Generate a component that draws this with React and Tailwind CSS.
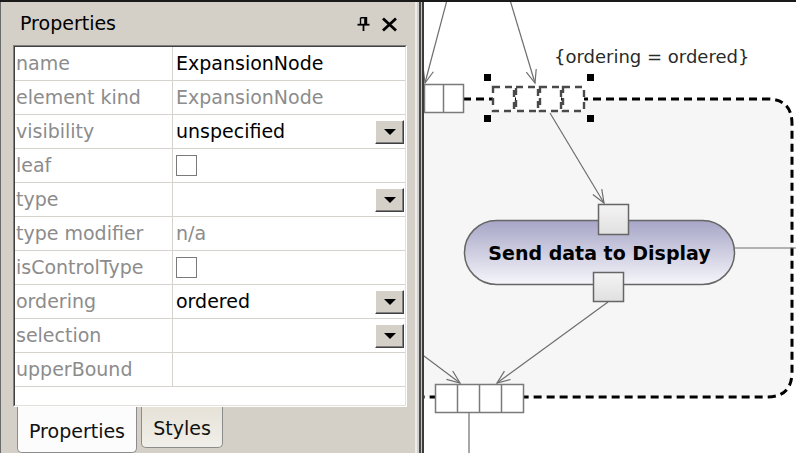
import React from 'react';

const rows = [
  { label: 'name', value: 'ExpansionNode', dark: true },
  { label: 'element kind', value: 'ExpansionNode' },
  { label: 'visibility', value: 'unspecified', dark: true, combo: true },
  { label: 'leaf', check: true },
  { label: 'type', combo: true },
  { label: 'type modifier', value: 'n/a' },
  { label: 'isControlType', check: true },
  { label: 'ordering', value: 'ordered', dark: true, combo: true },
  { label: 'selection', combo: true },
  { label: 'upperBound' },
];

// open arrow head at (x2, y2), pointing along the line
const arrow = (x1, y1, x2, y2, len = 14, ang = 0.38) => {
  const a = Math.atan2(y2 - y1, x2 - x1);
  const ax = x2 - len * Math.cos(a - ang);
  const ay = y2 - len * Math.sin(a - ang);
  const bx = x2 - len * Math.cos(a + ang);
  const by = y2 - len * Math.sin(a + ang);
  return `M${ax} ${ay} L${x2} ${y2} L${bx} ${by}`;
};

const flows = [
  [447, 0, 425, 83],
  [510, 0, 535, 83],
  [550, 113, 604, 203],
  [608, 302, 497, 383],
  [420, 353, 460, 383],
];

const ComboButton = () => (
  <div className="w-[29px] h-[24px] mr-px bg-[#d4d0c8] border border-t-white border-l-white border-r-[#404040] border-b-[#404040] shadow-[inset_-1px_-1px_0_#808080] flex items-center justify-center">
    <div className="w-0 h-0 border-x-[6px] border-x-transparent border-t-[6px] border-t-black" />
  </div>
);

const PropertyRow = ({ row }) => (
  <div className="flex h-[34px] border-b border-[#d6d3ce]">
    <div className="w-[158px] pl-px flex items-center border-r border-[#d6d3ce] text-[#8c8c8c] whitespace-nowrap">
      {row.label}
    </div>
    <div className="flex-1 flex items-center justify-between pl-[3px]">
      {row.check ? (
        <div className="w-[21px] h-[21px] border border-[#7a7a7a] bg-white" />
      ) : (
        <span className={row.dark ? 'text-black' : 'text-[#8c8c8c]'}>{row.value}</span>
      )}
      {row.combo && <ComboButton />}
    </div>
  </div>
);

const PinIcon = () => (
  <svg width="13" height="14" viewBox="0 0 13 14" className="mr-[11px]">
    <path d="M3.5 0.8 H9.5 V7 M3.5 0.8 V7" stroke="black" strokeWidth="1.4" fill="none" />
    <rect x="7.2" y="0.8" width="2.8" height="6.5" fill="black" />
    <rect x="0.5" y="6.8" width="12" height="1.8" fill="black" />
    <rect x="5.6" y="8" width="1.8" height="6" fill="black" />
  </svg>
);

const CloseIcon = () => (
  <svg width="17" height="15" viewBox="0 0 17 15">
    <path d="M2 1.5 L15 13.5 M15 1.5 L2 13.5" stroke="black" strokeWidth="2.8" />
  </svg>
);

export default function App() {
  const cells4 = [435, 457, 479, 501];
  const selCells = [492, 515, 539, 562];

  return (
    <div className="w-[796px] h-[453px] flex border-t-2 border-[#1a1a1a] overflow-hidden font-['DejaVu_Sans',Verdana,sans-serif] text-[19px] leading-none">
      {/* properties panel */}
      <div className="w-[415px] h-full shrink-0 bg-[#d4d0c8] border-l border-[#6b6b6b] flex flex-col">
        <div className="h-[43px] flex items-center justify-between pl-[19px] pr-[17px]">
          <span className="text-black">Properties</span>
          <div className="flex items-center pt-px">
            <PinIcon />
            <CloseIcon />
          </div>
        </div>

        <div className="ml-[12px] w-[394px] h-[362px] border-t border-l border-[#808080] border-b border-r border-b-white border-r-white">
          <div className="h-full border-t border-l border-[#404040] border-b border-r border-b-[#e4e1dc] border-r-[#e4e1dc] bg-white flex flex-col">
            {rows.map((row) => (
              <PropertyRow key={row.label} row={row} />
            ))}
          </div>
        </div>

        <div className="flex items-start pl-[16px]">
          <div className="w-[120px] h-[46px] bg-[#fcfcfc] border-x border-b border-[#8c8c8c] rounded-b-[5px] flex items-center justify-center pt-[3px] text-[#111]">
            Properties
          </div>
          <div className="ml-[4px] w-[82px] h-[41px] bg-gradient-to-b from-[#e6e2d8] to-[#f1efe9] border-x border-b border-[#8c8c8c] rounded-b-[5px] flex items-center justify-center pt-[2px] text-[#111]">
            Styles
          </div>
        </div>
      </div>

      {/* splitter */}
      <div className="w-[2px] h-full bg-[#ececec]" />
      <div className="w-[2px] h-full bg-[#d4d0c8]" />
      <div className="w-[2px] h-full bg-[#4a4a4a]" />
      <div className="w-px h-full bg-[#c4c4c4]" />
      <div className="w-[2px] h-full bg-[#3c3c3c]" />

      {/* diagram canvas */}
      <div className="relative flex-1 h-full bg-white overflow-hidden">
        <svg className="absolute inset-0" width="372" height="451" viewBox="424 2 372 451">
          <defs>
            <linearGradient id="action" x1="0" y1="0" x2="0" y2="1">
              <stop offset="0" stopColor="#a6a5c6" />
              <stop offset="1" stopColor="#f6f6fb" />
            </linearGradient>
            <linearGradient id="pin" x1="0" y1="0" x2="0" y2="1">
              <stop offset="0" stopColor="#f4f4f4" />
              <stop offset="1" stopColor="#e0e0e0" />
            </linearGradient>
          </defs>

          {/* expansion region */}
          <path d="M424 99 H767 Q792 99 792 124 V372 Q792 397 767 397 H424 Z" fill="#f6f6f6" />
          <path
            d="M463 99 H767 Q792 99 792 124 V372 Q792 397 767 397 H424"
            fill="none"
            stroke="black"
            strokeWidth="3"
            strokeDasharray="8 5"
          />

          {/* flows */}
          <g stroke="#6e6e6e" strokeWidth="1.2" fill="none">
            {flows.map(([x1, y1, x2, y2], i) => (
              <g key={i}>
                <path d={`M${x1} ${y1} L${x2} ${y2}`} />
                <path d={arrow(x1, y1, x2, y2)} />
              </g>
            ))}
            <path d="M735 248 H796" />
            <path d="M469 413 V453" />
          </g>

          {/* input pin of the region */}
          <rect x="424.5" y="84.5" width="39" height="28" fill="white" stroke="#7a7a7a" strokeWidth="1.5" />
          <path d="M443.5 84.5 V112.5" stroke="#7a7a7a" strokeWidth="1.5" />

          {/* selected pin group */}
          {selCells.map((x, i) => (
            <rect
              key={i}
              x={x + 1}
              y="87"
              width={(selCells[i + 1] || 585) - x - 2}
              height="24"
              fill="white"
              stroke="#4a4a4a"
              strokeWidth="2.4"
              strokeDasharray="7 5"
            />
          ))}
          {[
            [484, 74],
            [587, 74],
            [484, 115],
            [587, 115],
          ].map(([x, y], i) => (
            <rect key={i} x={x} y={y} width="7" height="7" fill="black" />
          ))}

          {/* action */}
          <rect x="464.5" y="220.5" width="270" height="64" rx="32" fill="url(#action)" stroke="#666" strokeWidth="1.5" />
          <rect x="598.5" y="204.5" width="30" height="30" fill="url(#pin)" stroke="#666" strokeWidth="1.5" />
          <rect x="593.5" y="272.5" width="30" height="29" fill="url(#pin)" stroke="#666" strokeWidth="1.5" />

          {/* output pin of the region */}
          <rect x="435.5" y="384.5" width="88" height="28" fill="white" stroke="#7a7a7a" strokeWidth="1.5" />
          {cells4.slice(1).map((x) => (
            <path key={x} d={`M${x + 0.5} 384.5 V412.5`} stroke="#7a7a7a" strokeWidth="1.5" />
          ))}
        </svg>

        <div className="absolute left-[130px] top-[44px] text-[18px] leading-[21px] text-[#2a2a2a] whitespace-nowrap">
          {'{ordering = ordered}'}
        </div>
        <div className="absolute left-[40px] top-[218px] w-[271px] h-[66px] flex items-center justify-center font-bold text-black whitespace-nowrap">
          Send data to Display
        </div>
      </div>
    </div>
  );
}
